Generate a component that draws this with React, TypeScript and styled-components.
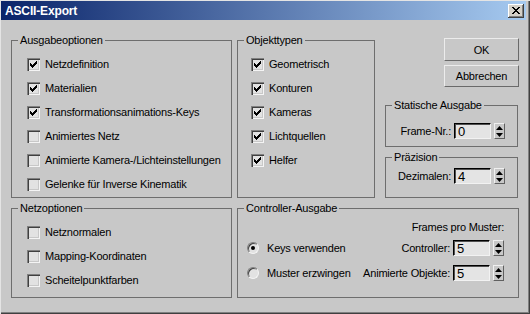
import styled, { createGlobalStyle } from 'styled-components'

const face = '#c8c8c8'
const line = '#6e6e6e'

const GlobalStyle = createGlobalStyle`
  html, body {
    margin: 0;
    padding: 0;
    background: ${face};
  }
  body {
    font-family: "Liberation Sans", Arial, sans-serif;
    font-size: 11px;
  }
`

const Window = styled.div`
  width: 530px;
  height: 314px;
  box-sizing: border-box;
  padding: 1px 4px 4px 1px;
  background: ${face};
  box-shadow: inset 1px 1px 0 #e4e4e4, inset -1px -1px 0 #404040, inset -2px -2px 0 #808080;
  display: flex;
  flex-direction: column;
  color: #000;
  letter-spacing: -0.2px;
`

const TitleBar = styled.div`
  height: 19px;
  display: flex;
  align-items: center;
  justify-content: space-between;
  padding: 0 2px 0 4px;
  background: linear-gradient(to right, #0a246a, #a6caf0);
`

const Title = styled.span`
  color: #fff;
  font-weight: bold;
  font-size: 12px;
  letter-spacing: -0.15px;
`

const CloseButton = styled.div`
  width: 16px;
  height: 14px;
  box-sizing: border-box;
  background: #d4d0c8;
  box-shadow: inset -1px -1px 0 #404040, inset 1px 1px 0 #fff, inset -2px -2px 0 #808080;
  display: flex;
  align-items: center;
  justify-content: center;
`

const Body = styled.div`
  display: flex;
  flex-direction: column;
  gap: 4px;
  padding: 14px 0 0 10px;
`

const Row = styled.div<{ $h: number }>`
  display: flex;
  height: ${p => p.$h}px;
`

const GroupBox = styled.fieldset<{ $w: number; $mr?: number; $h?: number; $mt?: number }>`
  margin: ${p => p.$mt || 0}px ${p => p.$mr || 0}px 0 0;
  padding: 0;
  width: ${p => p.$w}px;
  ${p => (p.$h ? `height: ${p.$h}px;` : '')}
  box-sizing: border-box;
  min-width: 0;
  border: 1px solid ${line};
  flex: none;
`

const Legend = styled.legend`
  margin-left: 6px;
  padding: 0 2px;
  line-height: 13px;
`

const CheckList = styled.div<{ $pl: number }>`
  display: flex;
  flex-direction: column;
  padding: 5px 0 0 ${p => p.$pl}px;
`

const CheckRow = styled.label`
  display: flex;
  align-items: center;
  gap: 5px;
  height: 24px;
`

const Box = styled.span`
  width: 13px;
  height: 13px;
  box-sizing: border-box;
  background: #e2e2e2;
  box-shadow: inset 1px 1px 0 #808080, inset 2px 2px 0 #404040, inset -1px -1px 0 #f4f4f4,
    inset -2px -2px 0 #c8c8c8;
  flex: none;
`

const RightCol = styled.div`
  width: 134px;
  display: flex;
  flex-direction: column;
`

const ButtonStack = styled.div`
  align-self: flex-end;
  display: flex;
  flex-direction: column;
  gap: 4px;
  margin-top: 4px;
`

const Button = styled.button<{ $h: number }>`
  width: 75px;
  height: ${p => p.$h}px;
  padding: 0;
  background: ${face};
  border: 1px solid;
  border-color: #ececec #6a6a6a #6a6a6a #ececec;
  font: inherit;
  letter-spacing: -0.2px;
  color: #000;
`

const FieldRow = styled.div<{ $pt?: number; $pr?: number }>`
  display: flex;
  align-items: center;
  justify-content: flex-end;
  gap: 2px;
  padding: ${p => p.$pt || 0}px ${p => p.$pr || 0}px 0 0;
`

const FieldLabel = styled.span`
  margin-right: 1px;
`

const Field = styled.div`
  width: 37px;
  height: 16px;
  box-sizing: border-box;
  background: #e4e4e4;
  border: 1px solid;
  border-color: #000 #f2f2f2 #f2f2f2 #000;
  box-shadow: inset 1px 1px 0 #505050;
  padding-left: 3px;
  display: flex;
  align-items: center;
  font-size: 13px;
  letter-spacing: 0;
`

const Spinner = styled.div`
  width: 11px;
  height: 16px;
  box-sizing: border-box;
  margin-left: 1px;
  border: 1px solid;
  border-color: #f0f0f0 #606060 #606060 #f0f0f0;
  display: flex;
  flex-direction: column;
  align-items: center;
  justify-content: space-around;
  background: ${face};
`

const ControllerGrid = styled.div`
  display: grid;
  grid-template-columns: 1fr auto;
  grid-template-rows: 16px 26px 24px;
  align-items: center;
  padding: 4px 14px 0 9px;
`

const Right = styled.div`
  grid-column: 2;
  justify-self: end;
`

const RadioRow = styled.label`
  display: flex;
  align-items: center;
  gap: 8px;
`

const Radio = styled.span<{ $on?: boolean }>`
  width: 12px;
  height: 12px;
  box-sizing: border-box;
  border-radius: 50%;
  background: #e2e2e2;
  border: 1px solid;
  border-color: #808080 #f4f4f4 #f4f4f4 #808080;
  box-shadow: inset 1px 1px 0 #404040;
  display: flex;
  align-items: center;
  justify-content: center;
  &::after {
    content: '';
    width: 4px;
    height: 4px;
    border-radius: 50%;
    background: ${p => (p.$on ? '#000' : 'transparent')};
  }
`

const Check = ({ on }: { on?: boolean }) => (
  <Box>
    {on && (
      <svg width="13" height="13" viewBox="0 0 13 13" shapeRendering="crispEdges">
        <path d="M3 5 L5 7 L10 2 L10 5 L5 10 L3 8 Z" fill="#000" />
      </svg>
    )}
  </Box>
)

const CheckItem = ({ on, children }: { on?: boolean; children: string }) => (
  <CheckRow>
    <Check on={on} />
    {children}
  </CheckRow>
)

const Spin = () => (
  <Spinner>
    <svg width="7" height="4" viewBox="0 0 7 4">
      <path d="M3.5 0 L7 4 L0 4 Z" fill="#000" />
    </svg>
    <svg width="7" height="4" viewBox="0 0 7 4">
      <path d="M0 0 L7 0 L3.5 4 Z" fill="#000" />
    </svg>
  </Spinner>
)

const NumberField = ({ label, value }: { label: string; value: string }) => (
  <>
    <FieldLabel>{label}</FieldLabel>
    <Field>{value}</Field>
    <Spin />
  </>
)

const App = () => (
  <>
    <GlobalStyle />
    <Window>
      <TitleBar>
        <Title>ASCII-Export</Title>
        <CloseButton>
          <svg width="8" height="7" viewBox="0 0 8 7" shapeRendering="crispEdges">
            <path d="M0 0 L2 0 L4 2.5 L6 0 L8 0 L5 3.5 L8 7 L6 7 L4 4.5 L2 7 L0 7 L3 3.5 Z" fill="#000" />
          </svg>
        </CloseButton>
      </TitleBar>
      <Body>
        <Row $h={164}>
          <GroupBox $w={221} $mr={5}>
            <Legend>Ausgabeoptionen</Legend>
            <CheckList $pl={15}>
              <CheckItem on>Netzdefinition</CheckItem>
              <CheckItem on>Materialien</CheckItem>
              <CheckItem on>Transformationsanimations-Keys</CheckItem>
              <CheckItem>Animiertes Netz</CheckItem>
              <CheckItem>Animierte Kamera-/Lichteinstellungen</CheckItem>
              <CheckItem>Gelenke für Inverse Kinematik</CheckItem>
            </CheckList>
          </GroupBox>
          <GroupBox $w={138} $mr={10}>
            <Legend>Objekttypen</Legend>
            <CheckList $pl={13}>
              <CheckItem on>Geometrisch</CheckItem>
              <CheckItem on>Konturen</CheckItem>
              <CheckItem on>Kameras</CheckItem>
              <CheckItem on>Lichtquellen</CheckItem>
              <CheckItem on>Helfer</CheckItem>
            </CheckList>
          </GroupBox>
          <RightCol>
            <ButtonStack>
              <Button $h={23}>OK</Button>
              <Button $h={22}>Abbrechen</Button>
            </ButtonStack>
            <GroupBox $w={133} $h={48} $mt={12}>
              <Legend>Statische Ausgabe</Legend>
              <FieldRow $pt={11} $pr={12}>
                <NumberField label="Frame-Nr.:" value="0" />
              </FieldRow>
            </GroupBox>
            <GroupBox $w={133} $h={47} $mt={4}>
              <Legend>Präzision</Legend>
              <FieldRow $pt={4} $pr={12}>
                <NumberField label="Dezimalen:" value="4" />
              </FieldRow>
            </GroupBox>
          </RightCol>
        </Row>
        <Row $h={96}>
          <GroupBox $w={221} $mr={5}>
            <Legend>Netzoptionen</Legend>
            <CheckList $pl={15}>
              <CheckItem>Netznormalen</CheckItem>
              <CheckItem>Mapping-Koordinaten</CheckItem>
              <CheckItem>Scheitelpunktfarben</CheckItem>
            </CheckList>
          </GroupBox>
          <GroupBox $w={282}>
            <Legend>Controller-Ausgabe</Legend>
            <ControllerGrid>
              <Right>Frames pro Muster:</Right>
              <RadioRow>
                <Radio $on />
                Keys verwenden
              </RadioRow>
              <Right>
                <FieldRow>
                  <NumberField label="Controller:" value="5" />
                </FieldRow>
              </Right>
              <RadioRow>
                <Radio />
                Muster erzwingen
              </RadioRow>
              <Right>
                <FieldRow>
                  <NumberField label="Animierte Objekte:" value="5" />
                </FieldRow>
              </Right>
            </ControllerGrid>
          </GroupBox>
        </Row>
      </Body>
    </Window>
  </>
)

export default App
